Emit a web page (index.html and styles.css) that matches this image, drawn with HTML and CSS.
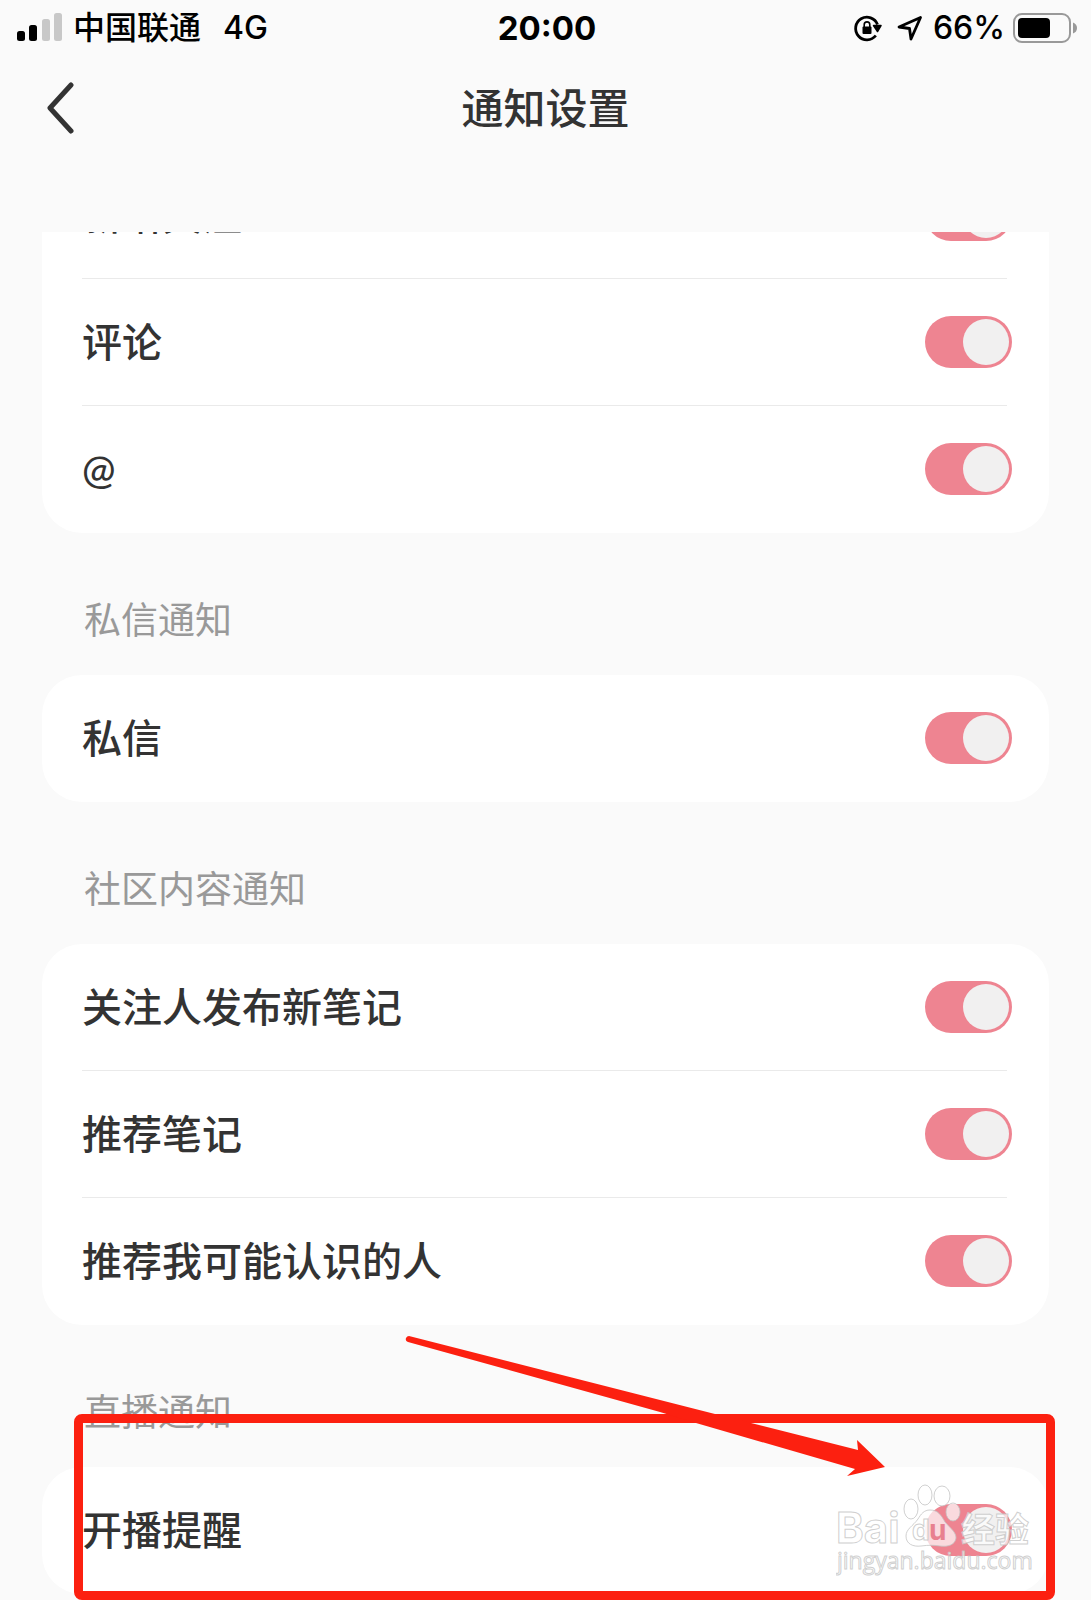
FILE: index.html
```html
<!DOCTYPE html>
<html lang="zh-CN">
<head>
    <meta charset="UTF-8">
    <meta name="viewport" content="width=device-width, initial-scale=1.0">
    <title>通知设置</title>
    <link rel="stylesheet" href="styles.css">
</head>
<body>

    <!-- Status Bar -->
    <div class="status-bar">
        <div class="status-left">
            <svg class="signal" width="46" height="30" viewBox="0 0 46 30">
                <rect x="0" y="18" width="8" height="10" rx="2.5" fill="#000"/>
                <rect x="12" y="12" width="8" height="16" rx="2.5" fill="#000"/>
                <rect x="25" y="6" width="8" height="22" rx="2.5" fill="#c8c8c8"/>
                <rect x="37" y="0" width="8" height="28" rx="2.5" fill="#c8c8c8"/>
            </svg>
            <span class="carrier">中国联通</span>
            <span>4G</span>
        </div>
        <div class="time">20:00</div>
        <div class="status-right">
            <svg width="30" height="28" viewBox="0 0 30 28">
                <path d="M22.800 21.500A11.300 11.300 0 1 1 24.500 10.500" fill="none" stroke="#000" stroke-width="2.8"/>
                <path d="M20.500 11.500H28L24.500 17.500Z" fill="#000" stroke="#000" stroke-width="1.5" stroke-linejoin="round"/>
                <rect x="9.500" y="12.500" width="9" height="7.500" rx="1" fill="#000"/>
                <path d="M11.200 13V10.700a2.800 2.800 0 0 1 5.600 0V13" fill="none" stroke="#000" stroke-width="1.6"/>
            </svg>
            <svg class="location" width="26" height="26" viewBox="0 0 26 26">
                <path d="M2 12 23.500 2.500 14 24 12.500 13.500Z" fill="none" stroke="#000" stroke-width="2.8" stroke-linejoin="round"/>
            </svg>
            <span>66%</span>
            <svg class="battery" width="64" height="30" viewBox="0 0 64 30">
                <rect x="1" y="1" width="56" height="28" rx="8" fill="none" stroke="#999" stroke-width="2"/>
                <rect x="5" y="5" width="32" height="20" rx="4" fill="#000"/>
                <path d="M60 9.500Q64 11 64 15T60 20.500Z" fill="#999"/>
            </svg>
        </div>
    </div>

    <!-- Title Bar -->
    <header class="header">
        <button class="back" type="button" aria-label="返回">
            <svg width="28" height="52" viewBox="0 0 28 52">
                <path d="M25 3 4 26 25 49" fill="none" stroke="#333" stroke-width="5" stroke-linecap="round" stroke-linejoin="round"/>
            </svg>
        </button>
        <h1>通知设置</h1>
    </header>

    <!-- Settings List -->
    <main class="scroll">
        <section class="group group-scrolled">
            <div class="card">
                <label class="row"><span>新增关注</span><input class="switch" type="checkbox" checked></label>
                <label class="row"><span>评论</span><input class="switch" type="checkbox" checked></label>
                <label class="row"><span>@</span><input class="switch" type="checkbox" checked></label>
            </div>
        </section>

        <section class="group">
            <h2>私信通知</h2>
            <div class="card">
                <label class="row"><span>私信</span><input class="switch" type="checkbox" checked></label>
            </div>
        </section>

        <section class="group">
            <h2>社区内容通知</h2>
            <div class="card">
                <label class="row"><span>关注人发布新笔记</span><input class="switch" type="checkbox" checked></label>
                <label class="row"><span>推荐笔记</span><input class="switch" type="checkbox" checked></label>
                <label class="row"><span>推荐我可能认识的人</span><input class="switch" type="checkbox" checked></label>
            </div>
        </section>

        <section class="group">
            <h2>直播通知</h2>
            <div class="card">
                <label class="row"><span>开播提醒</span><input class="switch" type="checkbox" checked></label>
            </div>

            <!-- Watermark -->
            <svg class="watermark" width="200" height="100" viewBox="0 0 200 100">
                <g fill="#fff" fill-opacity="0.7" stroke="#c4c4c4" stroke-opacity="0.8">
                    <text class="wm-bai" x="0" y="62">Bai</text>
                    <ellipse cx="75" cy="28" rx="7" ry="10"/>
                    <ellipse cx="89" cy="14" rx="7" ry="10"/>
                    <ellipse cx="106" cy="15" rx="8" ry="10"/>
                    <ellipse cx="117" cy="31" rx="7" ry="9"/>
                    <path d="M94 29C102 29 105 34 109 41C115 48 120 51 120 57C119 64 112 66 104 65C97 64 93 64 85 65C77 66 70 63 70 55C70 48 77 45 82 38C85 33 88 29 94 29Z"/>
                    <text class="wm-du" x="76" y="59">d</text>
                    <text class="wm-name" x="125" y="61">经验</text>
                    <text class="wm-url" x="1" y="88">jingyan.baidu.com</text>
                </g>
                <text class="wm-du" x="93" y="59" fill="#e8808f">u</text>
            </svg>

            <!-- Highlight box and arrow -->
            <div class="highlight"></div>
            <svg class="arrow" width="490" height="150" viewBox="0 0 490 150">
                <path d="M9 6 311 83 458 120 457 110 485 137 447 146 455 139 296 93 260 82 8 12Q5 11 6 8Q7 6 9 6Z" fill="#fc2010"/>
            </svg>
        </section>
    </main>

</body>
</html>
```
FILE: styles.css
```css
body {
    margin: 0;
    background: #fafafa;
    color: #333;
    font-family: Lato, "Noto Sans CJK SC", sans-serif;
}
/* Status Bar */
.status-bar {
    display: grid;
    grid-template-columns: 1fr auto 1fr;
    align-items: center;
    height: 54px;
    padding: 0 14px 0 17px;
    color: #000;
    font-family: Inter, "Noto Sans CJK SC", sans-serif;
    font-size: 32px;
    font-weight: 500;
    line-height: 56px;
}
.status-left,
.status-right {
    display: flex;
    align-items: center;
}
.status-right {
    justify-content: flex-end;
}
.carrier {
    margin: 0 22px 0 10px;
}
.time {
    font-size: 33px;
    font-weight: 700;
}
.location {
    margin: 0 10px 0 14px;
}
.battery {
    margin-left: 8px;
}
/* Title Bar */
.header {
    display: grid;
    grid-template-columns: 1fr auto 1fr;
    align-items: center;
    height: 108px;
    padding: 0 46px;
    margin-bottom: 70px;
}
.back {
    justify-self: start;
    padding: 0;
    border: none;
    background: none;
    line-height: 0;
    cursor: pointer;
}
h1 {
    margin: 0;
    font-size: 42px;
    font-weight: 500;
    line-height: 56px;
}
/* Settings List */
.scroll {
    overflow: hidden;
}
.group {
    position: relative;
    margin: 0 42px;
}
.group-scrolled {
    margin-top: -80px;
}
.group:last-child {
    padding-bottom: 6px;
}
h2 {
    margin: 0;
    padding: 59px 42px 27px;
    color: #999;
    font-size: 37px;
    font-weight: 400;
    line-height: 56px;
}
.card {
    padding: 0 42px 0 40px;
    border-radius: 40px;
    background: #fff;
}
.row {
    display: flex;
    align-items: center;
    justify-content: space-between;
    height: 127px;
    box-sizing: border-box;
    border-bottom: 1px solid #eaeaea;
    font-size: 40px;
    font-weight: 500;
    line-height: 56px;
}
.row:last-child {
    border-bottom-color: transparent;
}
/* Switch */
.switch {
    appearance: none;
    display: flex;
    justify-content: flex-end;
    width: 87px;
    height: 52px;
    box-sizing: border-box;
    margin: 0 -5px 0 0;
    padding: 3px;
    border-radius: 26px;
    background: #ee8491;
    cursor: pointer;
}
.switch::before {
    content: "";
    width: 46px;
    height: 46px;
    border-radius: 50%;
    background: #f1f0f0;
}
.switch:not(:checked) {
    justify-content: flex-start;
    background: #ddd;
}
/* Overlays */
.highlight {
    position: absolute;
    top: 89px;
    left: 32px;
    right: -6px;
    bottom: 0;
    box-sizing: border-box;
    border: 9px solid #fc2010;
    border-radius: 8px;
    pointer-events: none;
}
.arrow {
    position: absolute;
    top: 5px;
    right: 159px;
    pointer-events: none;
}
.watermark {
    position: absolute;
    top: 156px;
    right: 13px;
    pointer-events: none;
}
.wm-bai {
    font: 700 42px Inter, sans-serif;
}
.wm-du {
    font: 700 28px Inter, sans-serif;
}
.wm-name {
    font: 700 34px "Noto Sans CJK SC", sans-serif;
}
.wm-url {
    font: 400 23px "Open Sans", sans-serif;
}
```
